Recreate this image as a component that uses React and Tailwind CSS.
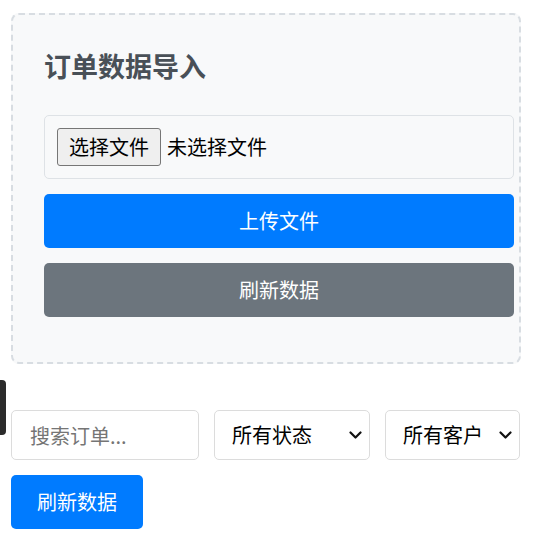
import React from "react";

function Chevron() {
  return (
    <svg width="13" height="9" viewBox="0 0 13 9" fill="none" className="shrink-0">
      <path d="M1.5 1.5 L6.5 6.5 L11.5 1.5" stroke="#111" strokeWidth="2.2" strokeLinecap="round" strokeLinejoin="round" />
    </svg>
  );
}

export default function App() {
  return (
    <div
      className="relative min-h-[546px] bg-white px-[11px] pt-[13px] text-[#212529]"
      style={{ fontFamily: '"Noto Sans CJK SC", "Noto Sans", sans-serif' }}
    >
      <div className="absolute left-0 top-[380px] h-[55px] w-[6px] rounded-r-[4px] bg-[#2b2b2b]" />

      <div className="w-[510px] h-[351px] rounded-[8px] border-2 border-dashed border-[#d8dde2] bg-[#f8f9fa] pl-[31px] pt-[34px]">
        <h2 className="text-[27px] font-bold leading-[34px] text-[#495057]">订单数据导入</h2>

        <div className="mt-[32px] flex h-[64px] w-[470px] items-center rounded-[5px] border border-[#dee2e6] px-[12px]">
          <div className="flex h-[38px] items-center rounded-[3px] border border-[#767676] bg-[#efefef] px-[11px] text-[20px] leading-none text-black">
            选择文件
          </div>
          <span className="ml-[6px] text-[20px] leading-none text-black">未选择文件</span>
        </div>

        <div className="mt-[15px] flex h-[54px] w-[470px] items-center justify-center rounded-[5px] bg-[#007bff] text-[20px] text-white">
          上传文件
        </div>
        <div className="mt-[15px] flex h-[54px] w-[470px] items-center justify-center rounded-[5px] bg-[#6c757d] text-[20px] text-white">
          刷新数据
        </div>
      </div>

      <div className="mt-[46px] flex gap-[15px]">
        <input
          className="h-[50px] w-[188px] rounded-[5px] border border-[#dcdcdc] bg-white px-[18px] text-[20px] outline-none placeholder:text-[#757575]"
          placeholder="搜索订单..."
          style={{ fontFamily: '"Noto Sans CJK SC", "Noto Sans", sans-serif' }}
        />
        <div className="flex h-[50px] w-[156px] items-center justify-between rounded-[5px] border border-[#dcdcdc] bg-white pl-[17px] pr-[7px] text-[20px] text-black">
          <span>所有状态</span>
          <Chevron />
        </div>
        <div className="flex h-[50px] w-[135px] items-center justify-between rounded-[5px] border border-[#dcdcdc] bg-white pl-[17px] pr-[7px] text-[20px] text-black">
          <span>所有客户</span>
          <Chevron />
        </div>
      </div>

      <div className="mt-[15px] flex h-[54px] w-[132px] items-center justify-center rounded-[5px] bg-[#007bff] text-[20px] text-white">
        刷新数据
      </div>
    </div>
  );
}
